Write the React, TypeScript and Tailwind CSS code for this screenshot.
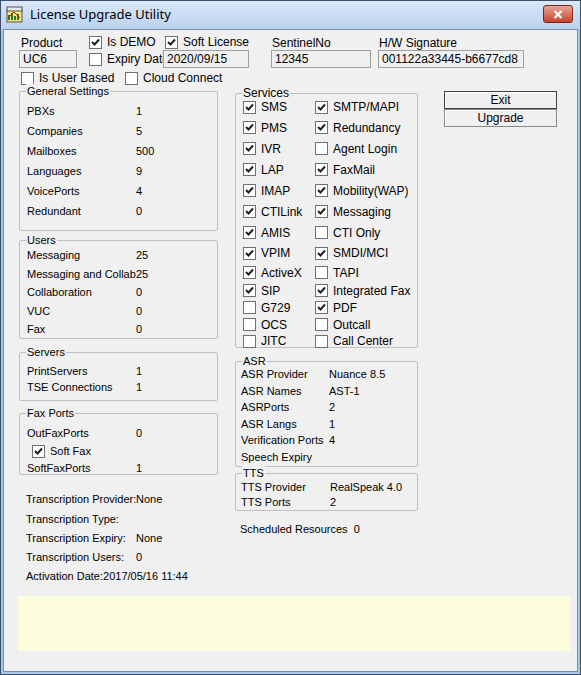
import React from "react";

const Check = ({ on, className = "" }: { on?: boolean; className?: string }) => (
  <span className={`inline-flex w-[13px] h-[13px] shrink-0 bg-white border border-[#707070] items-center justify-center ${className}`}>
    {on && (
      <svg width="9" height="9" viewBox="0 0 9 9">
        <path d="M1 4 L3.5 6.5 L8 1.5" stroke="#1f1f1f" strokeWidth="2" fill="none" />
      </svg>
    )}
  </span>
);

const CB = ({ on, label, className = "" }: { on?: boolean; label: string; className?: string }) => (
  <div className={`flex items-center gap-[5px] whitespace-nowrap ${className}`}>
    <Check on={on} />
    <span>{label}</span>
  </div>
);

const Field = ({ value, w }: { value: string; w: string }) => (
  <div className={`h-[18px] ${w} border border-[#a0a0a0] bg-[#f0f0f0] px-[3px] leading-[16px]`}>{value}</div>
);

const Group = ({ title, className, children }: { title: string; className: string; children: React.ReactNode }) => (
  <div className={`relative border border-[#c0c0c0] rounded-[2px] ${className}`}>
    <span className="absolute -top-[8px] left-[6px] bg-[#f0f0f0] px-[1px] leading-[14px]">{title}</span>
    {children}
  </div>
);

const KV = ({ k, v, h = "h-[20px]", vx = "w-[109px]" }: { k: string; v: string; h?: string; vx?: string }) => (
  <div className={`flex items-center whitespace-nowrap ${h}`}>
    <span className={`${vx} shrink-0`}>{k}</span>
    <span>{v}</span>
  </div>
);

export default function App() {
  const services: [string, boolean, string, boolean][] = [
    ["SMS", true, "SMTP/MAPI", true],
    ["PMS", true, "Redundancy", true],
    ["IVR", true, "Agent Login", false],
    ["LAP", true, "FaxMail", true],
    ["IMAP", true, "Mobility(WAP)", true],
    ["CTILink", true, "Messaging", true],
    ["AMIS", true, "CTI Only", false],
    ["VPIM", true, "SMDI/MCI", true],
    ["ActiveX", true, "TAPI", false],
    ["SIP", true, "Integrated Fax", true],
    ["G729", false, "PDF", true],
    ["OCS", false, "Outcall", false],
    ["JITC", false, "Call Center", false],
  ];
  const sh = [20, 21, 21, 21, 21, 21, 21, 20, 19, 17, 17, 17, 16];
  return (
    <div className="w-[581px] h-[675px] bg-[#a9c7ec] border border-[#3b4f6b] flex flex-col text-[11px] text-black" style={{ fontFamily: '"Liberation Sans", Arial, sans-serif' }}>
      <div className="h-[28px] flex items-center px-[5px] bg-gradient-to-b from-[#dbe8f8] to-[#b9d1ef] relative">
        <svg width="18" height="18" viewBox="0 0 18 18" className="mr-[6px]">
          <rect x="1" y="3" width="15" height="13" fill="#f3e37a" stroke="#555" />
          <rect x="1" y="1" width="15" height="4" fill="#e8e8e8" stroke="#555" />
          <path d="M3 14 L3 9 M6 14 L6 7 M9 14 L9 10 M12 14 L12 8" stroke="#2a7a2a" strokeWidth="2" />
          <path d="M2 12 L8 6 L14 12" stroke="#a02020" strokeWidth="1" fill="none" />
        </svg>
        <span className="text-[13px]" style={{ fontFamily: '"Noto Sans", sans-serif' }}>License Upgrade Utility</span>
        <div className="absolute right-[7px] top-[4px] w-[30px] h-[18px] rounded-[3px] border border-[#6d2a22] bg-gradient-to-b from-[#e8a595] to-[#c4422c] flex items-center justify-center">
          <svg width="10" height="9" viewBox="0 0 10 9"><path d="M1.5 1 L8.5 8 M8.5 1 L1.5 8" stroke="white" strokeWidth="2.2" /></svg>
        </div>
      </div>
      <div className="flex-1 mx-[2px] mb-[2px] bg-[#f0f0f0] border border-[#7a8ea8] relative text-[11px]">
        <div className="flex pt-[4px] pl-[15px] text-[12px]">
          <div className="w-[70px]">
            <div className="h-[16px] ml-[2px]">Product</div>
            <Field value="UC6" w="w-[58px]" />
          </div>
          <div className="w-[74px]">
            <CB on label="Is DEMO" className="h-[16px]" />
            <CB label="Expiry Date:" className="h-[18px]" />
          </div>
          <div className="w-[108px]">
            <CB on label="Soft License" className="h-[16px] ml-[2px]" />
            <Field value="2020/09/15" w="w-[86px]" />
          </div>
          <div className="w-[107px]">
            <div className="h-[16px] ml-[1px]">SentinelNo</div>
            <Field value="12345" w="w-[100px]" />
          </div>
          <div>
            <div className="h-[16px] ml-[1px]">H/W Signature</div>
            <Field value="001122a33445-b6677cd8" w="w-[146px]" />
          </div>
        </div>
        <div className="flex pl-[17px] mt-[2px] h-[16px] text-[12px]">
          <CB label="Is User Based" className="w-[104px]" />
          <CB label="Cloud Connect" />
        </div>
        <div className="flex pl-[15px] mt-[5px]">
          <div className="w-[199px]">
            <Group title="General Settings" className="h-[140px] pl-[7px] pt-[9px]">
              {[["PBXs", "1"], ["Companies", "5"], ["Mailboxes", "500"], ["Languages", "9"], ["VoicePorts", "4"], ["Redundant", "0"]].map(([k, v]) => (
                <KV key={k} k={k} v={v} />
              ))}
            </Group>
            <Group title="Users" className="h-[99px] mt-[9px] pl-[7px] pt-[5px]">
              {[["Messaging", "25"], ["Messaging and Collab", "25"], ["Collaboration", "0"], ["VUC", "0"], ["Fax", "0"]].map(([k, v]) => (
                <KV key={k} k={k} v={v} h="h-[18.5px]" />
              ))}
            </Group>
            <Group title="Servers" className="h-[49px] mt-[13px] pl-[7px] pt-[10px]">
              <KV k="PrintServers" v="1" h="h-[16px]" />
              <KV k="TSE Connections" v="1" h="h-[16px]" />
            </Group>
            <Group title="Fax Ports" className="h-[62px] mt-[12px] pl-[7px] pt-[11px]">
              <KV k="OutFaxPorts" v="0" h="h-[17px]" />
              <CB on label="Soft Fax" className="h-[19px] ml-[5px]" />
              <KV k="SoftFaxPorts" v="1" h="h-[14px]" />
            </Group>
            <div className="pl-[7px] mt-[14px]">
              <KV k="Transcription Provider:" v="None" h="h-[20px]" vx="w-[110px]" />
              <KV k="Transcription Type:" v="" h="h-[20px]" />
              <KV k="Transcription Expiry:" v="None" h="h-[19px]" vx="w-[110px]" />
              <KV k="Transcription Users:" v="0" h="h-[18px]" vx="w-[110px]" />
              <div className="h-[20px] flex items-center">Activation Date:2017/05/16 11:44</div>
            </div>
          </div>
          <div className="w-[183px] ml-[17px] mt-[2px]">
            <Group title="Services" className="h-[255px] pl-[7px] pt-[3px] text-[12px]">
              {services.map(([a, ao, b, bo], i) => (
                <div key={a} className="flex items-center" style={{ height: sh[i] }}>
                  <CB on={ao} label={a} className="w-[72px]" />
                  <CB on={bo} label={b} />
                </div>
              ))}
            </Group>
            <Group title="ASR" className="h-[106px] mt-[13px] pl-[5px] pt-[4px]">
              {[["ASR Provider", "Nuance 8.5"], ["ASR Names", "AST-1"], ["ASRPorts", "2"], ["ASR Langs", "1"], ["Verification Ports", "4"], ["Speech Expiry", ""]].map(([k, v]) => (
                <KV key={k} k={k} v={v} h="h-[16.5px]" vx="w-[88px]" />
              ))}
            </Group>
            <Group title="TTS" className="h-[38px] mt-[6px] pl-[5px] pt-[6px]">
              <KV k="TTS Provider" v="RealSpeak 4.0" h="h-[15px]" vx="w-[89px]" />
              <KV k="TTS Ports" v="2" h="h-[15px]" vx="w-[89px]" />
            </Group>
            <div className="mt-[10px] pl-[5px]">Scheduled Resources&nbsp; 0</div>
          </div>
          <div className="ml-[26px] w-[113px] text-[12px]">
            <div className="h-[18px] border border-[#404040] bg-[#f0f0f0] shadow-[inset_1px_1px_0_#fff] text-center leading-[16px]">Exit</div>
            <div className="h-[18px] border border-[#8a8a8a] bg-[#f0f0f0] shadow-[inset_1px_1px_0_#fff] text-center leading-[16px]">Upgrade</div>
          </div>
        </div>
        <div className="absolute left-[14px] top-[566px] w-[552px] h-[55px] bg-[#fcfddd]" />
      </div>
    </div>
  );
}
